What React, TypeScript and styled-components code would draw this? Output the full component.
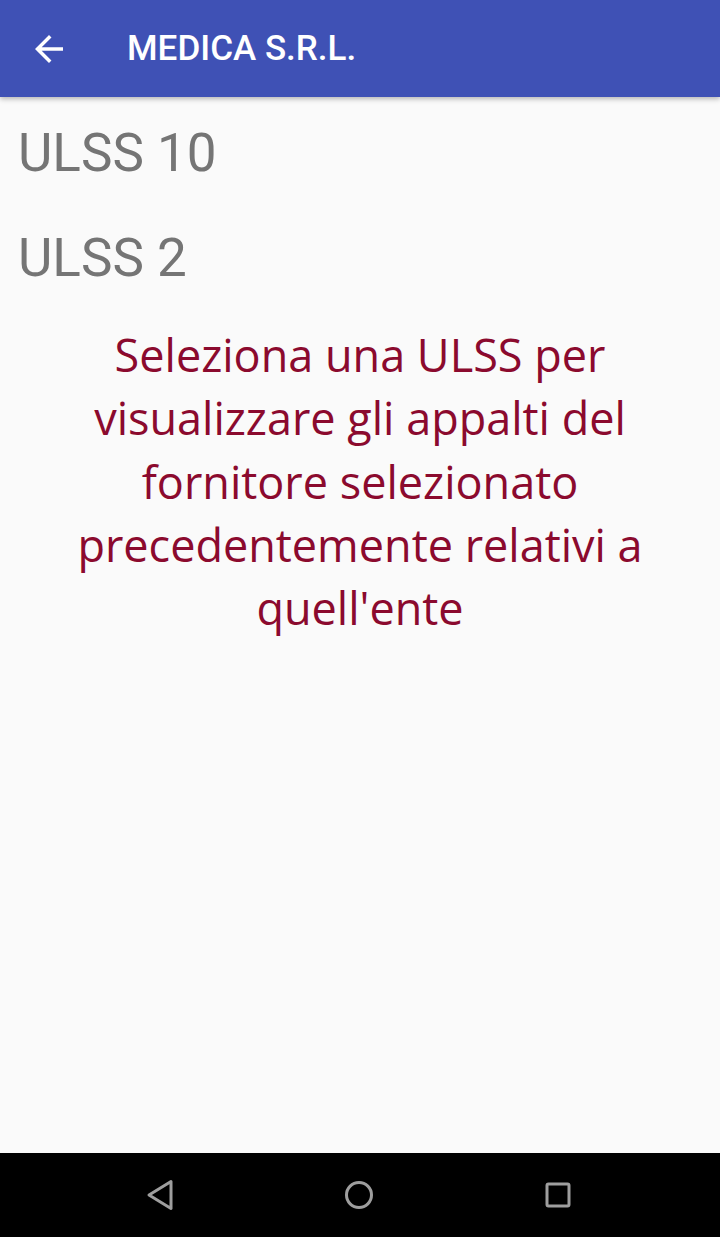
import React from "react";
import styled, { createGlobalStyle } from "styled-components";

const Global = createGlobalStyle`
  html, body { margin: 0; padding: 0; }
  body { background: #fafafa; }
  #root { height: 100vh; }
`;

const Screen = styled.div`
  height: 1237px;
  display: flex;
  flex-direction: column;
  background: #fafafa;
  overflow: hidden;
`;

const AppBar = styled.header`
  height: 97px;
  flex: none;
  display: flex;
  align-items: center;
  background: #3f51b5;
  box-shadow: 0 2px 5px rgba(0, 0, 0, 0.28);
  position: relative;
  z-index: 1;
`;

const NavButton = styled.button`
  width: 42px;
  height: 42px;
  margin-left: 28px;
  padding: 0;
  border: none;
  background: transparent;
  display: flex;
  align-items: center;
  justify-content: center;
`;

const Title = styled.h1`
  margin: 0 0 0 57px;
  font-family: Roboto, "Liberation Sans", sans-serif;
  font-weight: 500;
  font-size: 35px;
  color: #ffffff;
  letter-spacing: 0;
`;

const Content = styled.main`
  flex: 1;
  display: flex;
  flex-direction: column;
`;

const List = styled.ul`
  list-style: none;
  margin: 0;
  padding: 4px 0 0 0;
`;

const ListItem = styled.li`
  font-family: Roboto, "Liberation Sans", sans-serif;
  font-size: 53px;
  line-height: 105px;
  height: 105px;
  padding-left: 18px;
  color: #757575;
`;

const Hint = styled.p`
  margin: 12px 0 0 0;
  text-align: center;
  font-family: "Open Sans", "Noto Sans", sans-serif;
  font-size: 45px;
  line-height: 63.3px;
  color: #8b0a2e;
`;

const SystemBar = styled.nav`
  height: 84px;
  flex: none;
  background: #000000;
  display: flex;
  align-items: center;
  justify-content: space-between;
  padding: 0 138px 0 136px;
`;

const SysIcon = styled.svg`
  width: 48px;
  height: 48px;
`;

export default function App() {
  return (
    <Screen>
      <Global />
      <AppBar>
        <NavButton aria-label="Indietro">
          <svg width="42" height="42" viewBox="0 0 24 24">
            <path
              d="M20 11H7.83l5.59-5.59L12 4l-8 8 8 8 1.41-1.41L7.83 13H20v-2z"
              fill="#ffffff"
            />
          </svg>
        </NavButton>
        <Title>MEDICA S.R.L.</Title>
      </AppBar>
      <Content>
        <List>
          <ListItem>ULSS 10</ListItem>
          <ListItem>ULSS 2</ListItem>
        </List>
        <Hint>
          Seleziona una ULSS per
          <br />
          visualizzare gli appalti del
          <br />
          fornitore selezionato
          <br />
          precedentemente relativi a
          <br />
          quell'ente
        </Hint>
      </Content>
      <SystemBar>
        <SysIcon viewBox="0 0 48 48">
          <path
            d="M35 10.5 L13 24 L35 37.5 Z"
            fill="none"
            stroke="#9e9e9e"
            strokeWidth="3"
            strokeLinejoin="round"
          />
        </SysIcon>
        <SysIcon viewBox="0 0 48 48">
          <circle cx="24" cy="24" r="12.5" fill="none" stroke="#9e9e9e" strokeWidth="3" />
        </SysIcon>
        <SysIcon viewBox="0 0 48 48">
          <rect x="13" y="13" width="22" height="22" rx="1.5" fill="none" stroke="#9e9e9e" strokeWidth="3" />
        </SysIcon>
      </SystemBar>
    </Screen>
  );
}
